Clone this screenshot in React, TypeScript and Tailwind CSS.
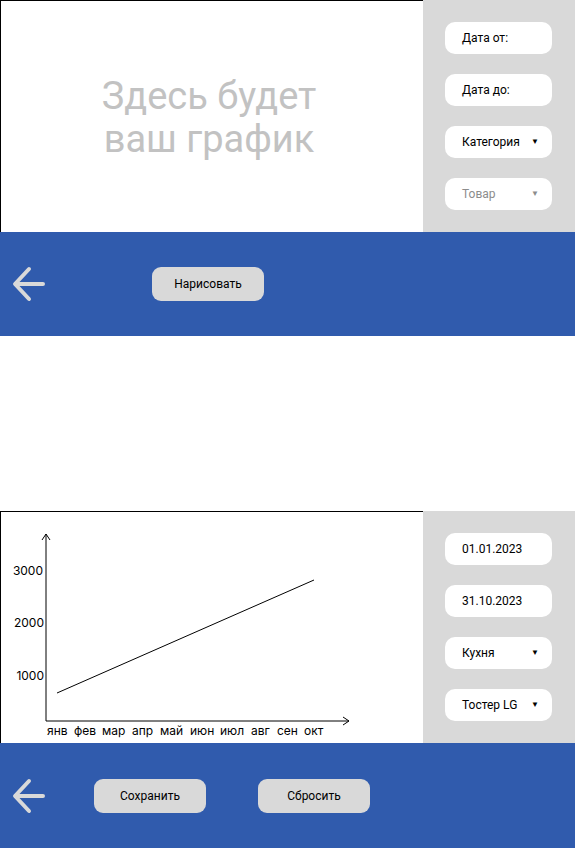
import React from 'react';

const font = { fontFamily: 'Roboto, "Noto Sans", sans-serif' };
const chartFont = { fontFamily: 'Inter, Roboto, sans-serif' };

function BackArrow() {
  return (
    <svg width="33" height="36" viewBox="0 0 33 36" fill="none">
      <path
        d="M31 18H4M17 3L3 18L17 33"
        stroke="#D9D9D9"
        strokeWidth="4"
        strokeLinecap="round"
        strokeLinejoin="round"
      />
    </svg>
  );
}

function Field({
  label,
  caret,
  muted,
}: {
  label: string;
  caret?: boolean;
  muted?: boolean;
}) {
  return (
    <div className="flex h-8 w-[107px] items-center justify-between rounded-[10px] bg-white pl-[17px] pr-[13px]">
      <span className={'text-[12px] ' + (muted ? 'text-[#8c8c8c]' : 'text-black')}>
        {label}
      </span>
      {caret && (
        <span className={'text-[8px] ' + (muted ? 'text-[#8c8c8c]' : 'text-black')}>▼</span>
      )}
    </div>
  );
}

function SidePanel({ children }: { children: React.ReactNode }) {
  return (
    <div className="flex w-[152px] flex-col gap-5 bg-[#D9D9D9] pl-[22px] pt-[22px]">
      {children}
    </div>
  );
}

function GreyButton({ children }: { children: React.ReactNode }) {
  return (
    <button className="h-[34px] w-[112px] rounded-[9px] bg-[#D9D9D9] text-[12px] text-black">
      {children}
    </button>
  );
}

const months = [
  ['янв', 46],
  ['фев', 73],
  ['мар', 101],
  ['апр', 131],
  ['май', 159],
  ['июн', 189],
  ['июл', 219],
  ['авг', 250],
  ['сен', 276],
  ['окт', 303],
] as const;

function Chart() {
  return (
    <svg width="423" height="232" viewBox="0 0 423 232" style={chartFont}>
      <path d="M45 22V209H348" stroke="#000" strokeWidth="1" fill="none" />
      <path d="M41 28L45 22L49 28" stroke="#000" strokeWidth="1" fill="none" />
      <path d="M342 205L348 209L342 213" stroke="#000" strokeWidth="1" fill="none" />
      <line x1="56" y1="181" x2="313" y2="68" stroke="#000" strokeWidth="1" />
      <text x="42" y="63" fontSize="12" textAnchor="end">3000</text>
      <text x="43" y="115" fontSize="12" textAnchor="end">2000</text>
      <text x="43" y="168" fontSize="12" textAnchor="end">1000</text>
      {months.map(([m, x]) => (
        <text key={m} x={x} y="223" fontSize="12">
          {m}
        </text>
      ))}
    </svg>
  );
}

export default function App() {
  return (
    <div className="w-[575px] bg-white" style={font}>
      {/* экран 1 */}
      <div className="flex h-[232px]">
        <div className="flex flex-1 items-center justify-center border-l border-t border-black">
          <p className="pr-[6px] pt-[2px] text-center text-[38px] leading-[43px] text-[#C2C2C2]">
            Здесь будет
            <br />
            ваш график
          </p>
        </div>
        <SidePanel>
          <Field label="Дата от:" />
          <Field label="Дата до:" />
          <Field label="Категория" caret />
          <Field label="Товар" caret muted />
        </SidePanel>
      </div>
      <div className="flex h-[104px] items-center bg-[#305BAD] pl-3">
        <BackArrow />
        <div className="ml-[107px]">
          <GreyButton>Нарисовать</GreyButton>
        </div>
      </div>

      {/* экран 2 */}
      <div className="mt-[175px] flex h-[232px]">
        <div className="flex-1 overflow-hidden border-l border-t border-black">
          <Chart />
        </div>
        <SidePanel>
          <Field label="01.01.2023" />
          <Field label="31.10.2023" />
          <Field label="Кухня" caret />
          <Field label="Тостер LG" caret />
        </SidePanel>
      </div>
      <div className="flex h-[105px] items-center bg-[#305BAD] pl-3">
        <BackArrow />
        <div className="ml-[49px] flex gap-[52px]">
          <GreyButton>Сохранить</GreyButton>
          <GreyButton>Сбросить</GreyButton>
        </div>
      </div>
    </div>
  );
}
